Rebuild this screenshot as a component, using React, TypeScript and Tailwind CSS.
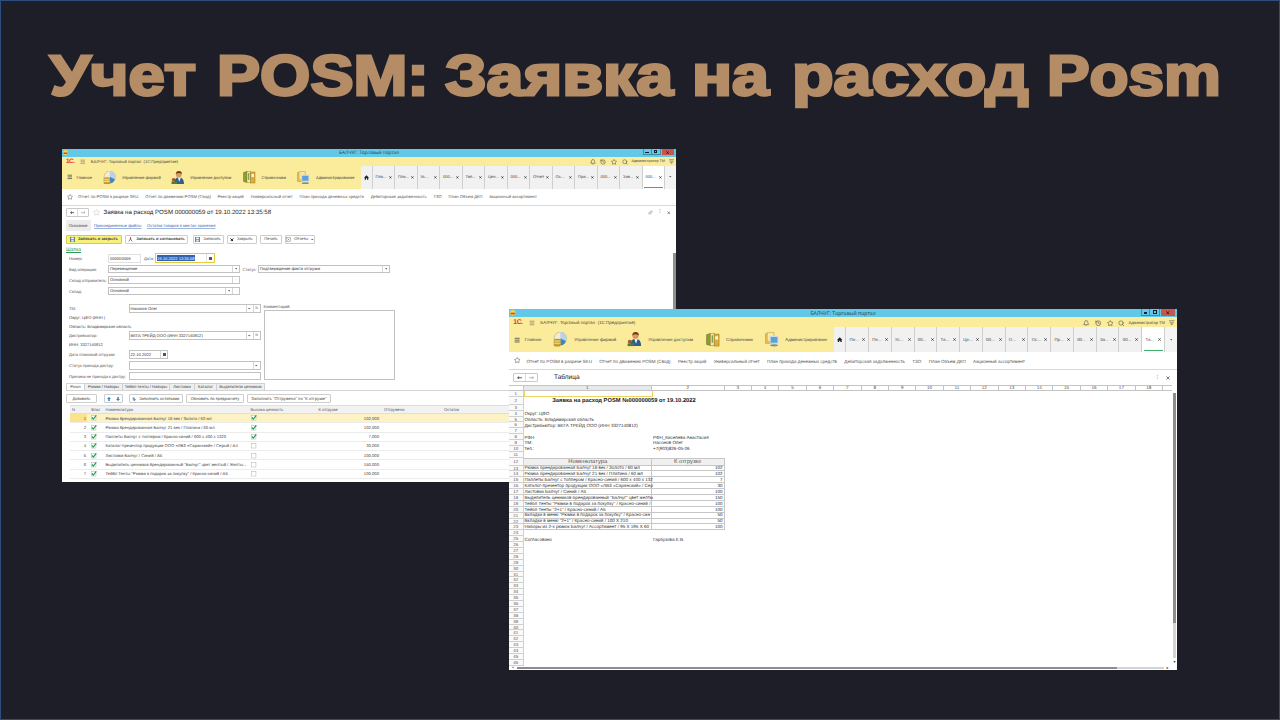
import React from "react";
import { Bell, History, Star, Search, Menu, Link2 } from "lucide-react";

type Kids = { children?: React.ReactNode; className?: string };

function BallIcon() {
  return (
    <svg viewBox="0 0 26 26" className="size-[1.35em]">
      <circle cx="13" cy="11" r="11" fill="#f3ead2" stroke="#b9a468" />
      <path d="M13 11 V0 A11 11 0 0 1 23 16 Z" fill="#b9d2e6" />
      <path d="M13 11 L23 16 A11 11 0 0 1 14 24 Z" fill="#3f86c4" />
      <rect x="2" y="13" width="11" height="12" rx="2" fill="#cda434" stroke="#957322" />
      <path d="M2 16 h11 M2 20 h11" stroke="#f4dd8b" strokeWidth="2" />
    </svg>
  );
}
function PersonIcon() {
  return (
    <svg viewBox="0 0 26 26" className="size-[1.35em]">
      <path d="M6 25 Q6 12 15 12 Q25 12 25 25 Z" fill="#2f5f86" />
      <path d="M13 12 l3 9 l3 -9 Z" fill="#f1f5f8" />
      <circle cx="15" cy="6.5" r="5.5" fill="#d8985a" />
      <path d="M9 6 Q10 0 15 0 Q21 0 21 6 Q15 2 9 6" fill="#6b3d16" />
      <path d="M1 20 h11 v5 h-11 Z" fill="#4c7f3f" />
      <circle cx="5" cy="17" r="3.5" fill="#9c5a35" />
    </svg>
  );
}
function BookIcon() {
  return (
    <svg viewBox="0 0 26 26" className="size-[1.3em]">
      <path d="M1 3 l7 -2 v22 l-7 -2 Z" fill="#8c9c31" stroke="#66741c" />
      <rect x="8" y="1" width="7" height="22" fill="#f6eab5" stroke="#9a8736" />
      <rect x="15" y="2" width="9" height="22" fill="#dcae3c" stroke="#9a7722" />
      <rect x="17" y="6" width="5" height="6" fill="#fff6d6" />
      <path d="M11.500 4 v14" stroke="#5e8a3a" strokeWidth="2" />
    </svg>
  );
}
function AdminIcon() {
  return (
    <svg viewBox="0 0 26 26" className="size-[1.35em]">
      <path d="M1 3 h14 v17 h-14 Z" fill="#efc65a" stroke="#b98b28" />
      <path d="M4 1 h12 v16 h-12 Z" fill="#fbe7a6" stroke="#c19a3d" />
      <rect x="9" y="8" width="14" height="12" rx="1.500" fill="#5aa2d8" stroke="#cfdbe4" strokeWidth="2" />
      <ellipse cx="16" cy="23.500" rx="7" ry="2" fill="#7f8c95" />
    </svg>
  );
}
function HomeIcon() {
  return (
    <svg viewBox="0 0 12 12" className="size-[.5em]">
      <path d="M6 0.500 L12 6.500 H10.300 V11.500 H7.300 V8 H4.700 V11.500 H1.700 V6.500 H0 Z" fill="#222" />
    </svg>
  );
}
function Caret() {
  return (
    <svg viewBox="0 0 8 5" className="h-[1.6px] w-[2.6px] shrink-0">
      <path d="M0 0 h8 l-4 5 Z" fill="#666" />
    </svg>
  );
}
function FilterIcon() {
  return (
    <svg viewBox="0 0 12 12" className="size-[.5em]" stroke="#555" strokeWidth="1.200" fill="none">
      <path d="M0 1.500 h12 M1 5 h10 M3.500 8 h5 l-2.500 3 Z" />
    </svg>
  );
}
function Arrow({ left, color = "#333" }: { left?: boolean; color?: string }) {
  return (
    <svg viewBox="0 0 12 8" className="h-[.32em] w-[.48em]">
      <path d={left ? "M12 4 H1.500 M5 1 L1.500 4 L5 7" : "M0 4 H10.500 M7 1 L10.500 4 L7 7"} stroke={color} strokeWidth="1.800" fill="none" />
    </svg>
  );
}

function Chrome({ tabs, narrow }: { tabs: string[]; narrow?: boolean }) {
  const t = "text-[.405em]";
  const links = [
    "Отчет по POSM в разрезе SKU",
    "Отчет по движению POSM (Свод)",
    "Реестр акций",
    "Универсальный отчет",
    "План прихода денежных средств",
    "Дебиторская задолженность",
    "ТЗО",
    "План Объем ДКП",
    "Акционный ассортимент",
  ];
  return (
    <header className="flex shrink-0 flex-col">
      <div className="flex h-[.75em] items-center bg-[#62c8e7]">
        <div className="flex w-[7em] pl-[.1em]">
          <svg viewBox="0 0 10 10" className="size-[.5em]">
            <circle cx="5" cy="5" r="5" fill="#f5d64b" />
            <path d="M1 5 h8 v3 h-8 Z" fill="#d8472d" />
          </svg>
        </div>
        <div className="flex flex-1 justify-center pt-[.2em]">
          <span className="font-['Open_Sans',sans-serif] text-[.47em] text-[#1d3a48]">БАЛЧУГ: Торговый портал</span>
        </div>
        <div className="flex h-full w-[7em] items-start justify-end pr-[.2em] text-[#10232c]">
          <div className="flex h-[.62em] w-[.9em] items-end justify-center border border-t-0 border-[#3f8ea8] pb-[.1em]">
            <i className="h-[.12em] w-[.34em] bg-[#10232c]" />
          </div>
          <div className="flex h-[.62em] w-[.9em] items-center justify-center border border-t-0 border-l-0 border-[#3f8ea8]">
            <i className="h-[.32em] w-[.34em] border border-[#10232c]" />
          </div>
          <div className="ml-[.1em] flex h-[.62em] w-[1.25em] items-center justify-center bg-[#c4574f]">
            <svg viewBox="0 0 8 8" className="size-[.32em]"><path d="M1 1 l6 6 M7 1 l-6 6" stroke="#2a0d0b" strokeWidth="2" /></svg>
          </div>
        </div>
      </div>
      <div className="flex h-[.95em] items-center bg-[#fbec9c] pt-[.1em] pl-[.4em] text-[#444]">
        <div className="flex w-[1.4em] pt-[.15em]">
          <span className="text-[.64em] font-bold tracking-[-.08em] text-[#d9402a]">1С.</span>
        </div>
        <div className="flex w-[1.080em]"><Menu className="size-[.55em]" strokeWidth={1.8} /></div>
        <div className="flex pt-[.08em]"><span className="text-[.413em]">БАЛЧУГ: Торговый портал&nbsp; (1С:Предприятие)</span></div>
        <div className="ml-auto flex items-center gap-[.48em] pr-[.2em]">
          <Bell className="size-[.6em]" />
          <History className="size-[.6em]" />
          <Star className="size-[.6em]" />
          <Search className="size-[.6em]" />
          <div className="-ml-[.14em] flex w-[3.280em] pt-[.1em]"><span className="text-[.375em]">Администратор ТМ</span></div>
          <FilterIcon />
        </div>
      </div>
      <div className="flex h-[2.25em] bg-[#fbec9c] text-[#444]">
        <div className="flex w-[29.900em] items-center">
          <div className="flex w-[1.450em] pl-[.45em]"><Menu className="size-[.58em]" strokeWidth={3} /></div>
          <div className="flex w-[2.600em] pt-[.06em]"><span className={t}>Главное</span></div>
          <div className="flex w-[1.950em]"><BallIcon /></div>
          <div className="flex w-[4.850em] pt-[.06em]"><span className={t}>Управление фирмой</span></div>
          <div className="flex w-[1.950em]"><PersonIcon /></div>
          <div className="flex w-[5.300em] pt-[.06em]"><span className={t}>Управление доступом</span></div>
          <div className="flex w-[1.850em]"><BookIcon /></div>
          <div className="flex w-[3.550em] pt-[.06em]"><span className={t}>Справочники</span></div>
          <div className="flex w-[1.900em]"><AdminIcon /></div>
          <div className="flex pt-[.06em]"><span className={t}>Администрирование</span></div>
        </div>
        <div className={"flex items-center justify-center border-r border-[#cfcfcf] bg-[#f1f1f1] " + (narrow ? "w-[1.100em]" : "w-[1.150em]")}><HomeIcon /></div>
        {tabs.map((s, i) => {
          const on = i === tabs.length - 1;
          return (
            <div key={i} className={"relative flex min-w-0 flex-1 items-center justify-between border-r border-[#cfcfcf] pr-[.25em] pl-[.3em] " + (on ? "bg-white" : "bg-[#f1f1f1]")}>
              <span className={t}>{s}</span>
              <svg viewBox="0 0 8 8" className="size-[.28em]"><path d="M1 1 l6 6 M7 1 l-6 6" stroke="#333" strokeWidth="2.200" /></svg>
              {on && <i className="absolute right-[.1em] bottom-[.08em] left-[.15em] h-[1px] bg-[#3fae6a]" />}
            </div>
          );
        })}
        <div className="flex w-[1.100em] items-center justify-center bg-[#f4f4f4]"><Caret /></div>
      </div>
      <div className="flex h-[1.700em] items-center border-b border-[#d9d9d9] pl-[.5em] text-[#555]">
        <div className="flex w-[1.100em]"><Star className="size-[.6em]" /></div>
        <div className="flex gap-[.68em] pt-[.22em]">
          {links.map((l) => (
            <div key={l} className="flex"><span className="text-[.420em]">{l}</span></div>
          ))}
        </div>
      </div>
    </header>
  );
}

function Btn({ children, className = "", tone = "border-[#cdcdcd] bg-white" }: Kids & { tone?: string }) {
  return (
    <div className={"flex h-[9px] shrink-0 items-center justify-center gap-[3px] rounded-[1px] border pt-[.6px] text-[4.05px] text-[#444] " + tone + " " + className}>
      {children}
    </div>
  );
}
function Field({ children, className = "", parts = [] }: Kids & { parts?: string[] }) {
  return (
    <div className={"flex h-[8.500px] shrink-0 items-stretch border border-[#c2c2c2] bg-white " + className}>
      <span className="flex flex-1 items-center pt-[.4px] pl-[1px] text-[#333]">{children}</span>
      {parts.map((p, i) => (
        <span key={i} className="flex w-[7px] items-center justify-center border-l border-[#d5d5d5] text-[3.500px] text-[#666]">
          {p === "v" ? <Caret /> : p === "cal" ? <i className="h-[3.500px] w-[3px] border border-t-2 border-[#555]" /> : p}
        </span>
      ))}
    </div>
  );
}
function Check({ on }: { on?: boolean }) {
  return (
    <svg viewBox="0 0 12 12" className="size-[5.500px] overflow-visible">
      <rect x="0.800" y="1" width="10" height="10" fill="#fff" stroke="#a9a9a9" />
      {on && <path d="M2 5 L5 9 L11.500 1" stroke="#1f9d50" strokeWidth="2.600" fill="none" />}
    </svg>
  );
}
function Disk() {
  return (
    <svg viewBox="0 0 10 10" className="size-[5px]">
      <rect x="0.500" y="0.500" width="9" height="9" fill="#5d8fb5" stroke="#3f6b8c" />
      <rect x="2.500" y="1" width="5" height="3.500" fill="#fff" />
      <rect x="2.500" y="6" width="5" height="3.500" fill="#dbe7ef" />
    </svg>
  );
}
function NavButtons({ className = "" }: Kids) {
  return (
    <div className={"flex h-[.850em] w-[2.300em] rounded-[1px] border border-[#c9c9c9] bg-white " + className}>
      <span className="flex flex-1 items-center justify-center border-r border-[#dddddd]"><Arrow left /></span>
      <span className="flex flex-1 items-center justify-center"><Arrow color="#aaa" /></span>
    </div>
  );
}

const items: [string, boolean, string][] = [
  ["Рюмка брендированная Балчуг 16 век / Золото / 60 мл", true, "102,000"],
  ["Рюмка брендированная Балчуг 21 век / Платина / 60 мл", true, "102,000"],
  ["Паллеты Балчуг с топпером / Красно-синий / 600 х 400 х 1320", true, "7,000"],
  ["Каталог-презентор продукции ООО «ЛВЗ «Саранский» / Серый / А4", false, "30,000"],
  ["Листовки Балчуг / Синий / А5", false, "100,000"],
  ["Выделитель ценников брендированный \"Балчуг\" цвет желтый / Желты...", false, "150,000"],
  ["Тейбл Тенты \"Рюмки в подарок за покупку\" / Красно-синий / А5", false, "100,000"],
];

function RequestWindow() {
  const label = "flex shrink-0 pt-[1px] text-[#555]";
  return (
    <section className="absolute top-[149px] left-[62px] flex h-[333px] w-[614px] flex-col overflow-hidden bg-white text-[10px]">
      <Chrome tabs={["Пла...", "Пла...", "Ус...", "000...", "Тип...", "Цен...", "000...", "Отчет", "Ос...", "При...", "000...", "Зав...", "000..."]} />
      <div className="flex h-[13.200px] shrink-0 items-center pt-[.5px] pr-[6px] pl-[4px]">
        <NavButtons />
        <div className="ml-[4px] flex w-[10.500px]"><Star className="size-[7px] text-[#bbb]" strokeWidth={1.5} /></div>
        <span className="pt-[1.600px] text-[6.130px] text-[#222]">Заявка на расход POSM 000000059 от 19.10.2022 13:35:58</span>
        <div className="ml-auto flex items-center gap-[6px] text-[6px] text-[#666]">
          <Link2 className="size-[5px] -rotate-45" />
          <span>⁝</span>
          <svg viewBox="0 0 8 8" className="size-[3.500px]"><path d="M1 1 l6 6 M7 1 l-6 6" stroke="#555" strokeWidth="1.500" /></svg>
        </div>
      </div>
      <div className="flex min-h-0 flex-1">
        <div className="flex w-[611px] flex-col pl-[4px] text-[4.100px] text-[#444]">
          <nav className="flex h-[13.500px] shrink-0 items-center">
            <span className="flex h-[11px] w-[24.500px] items-center justify-center bg-[#ededed] pt-[.6px]">Основное</span>
            <span className="ml-[3.500px] w-[53px] pt-[.6px] text-[#3a66b0] underline decoration-[#9db4dc] decoration-[.5px]">Присоединенные файлы</span>
            <span className="pt-[.6px] text-[#3a66b0] underline decoration-[#9db4dc] decoration-[.5px]">Остатки товаров в местах хранения</span>
          </nav>
          <div className="flex h-[14px] shrink-0 items-center">
            <Btn className="w-[56px] font-bold" tone="border-[#d8c94a] bg-[#f7f07a]"><Disk />Записать и закрыть</Btn>
            <Btn className="ml-[3px] w-[63px] font-bold">
              <svg viewBox="0 0 10 10" className="size-[5px]"><path d="M5 1 V4 L1.500 9 M5 4 L8.500 9" stroke="#555" strokeWidth="1.500" fill="none" /><circle cx="5" cy="1.800" r="1.500" fill="#c33" /></svg>
              Записать и согласовать
            </Btn>
            <Btn className="ml-[4.500px] w-[31px]"><Disk />Записать</Btn>
            <Btn className="ml-[3px] w-[30px]">
              <svg viewBox="0 0 8 8" className="size-[3.800px]"><path d="M1 1 l6 6 M7 1 l-6 6" stroke="#111" strokeWidth="2" /></svg>
              Закрыть
            </Btn>
            <Btn className="ml-[3.500px] w-[22px]">Печать</Btn>
            <Btn className="ml-[3px] w-[30px] gap-[2px]">
              <svg viewBox="0 0 10 10" className="size-[5px]"><rect x="1" y="1" width="8" height="8" fill="#fff" stroke="#888" /><path d="M3 3 l4 4 M7 3 l-4 4" stroke="#b36" /></svg>
              Отчеты<Caret />
            </Btn>
          </div>
          <div className="flex h-[7px] shrink-0 items-center pt-[.8px]"><span className="text-[5px] text-[#2d9a57] underline decoration-[.5px]">Шапка</span></div>
          <div className="flex h-[10.500px] shrink-0 items-center pl-[3px]">
            <div className={label + " w-[39px]"}>Номер:</div>
            <Field className="w-[33px] border-[#e0e0e0]">000000059</Field>
            <div className={label + " ml-[3px] w-[11px]"}>Дата:</div>
            <div className="flex h-[10px] w-[60px] items-center border border-[#e9c93c] bg-white pl-[1px]">
              <span className="flex h-[6px] w-[38px] items-center bg-[#3163b5] pt-[.6px] text-white">19.10.2022 13:35:58</span>
              <span className="ml-auto flex h-full w-[8px] items-center justify-center border-l border-[#e0e0e0]"><i className="h-[3.500px] w-[3px] border border-t-2 border-[#555]" /></span>
            </div>
          </div>
          <div className="flex h-[11px] shrink-0 items-center pl-[3px]">
            <div className={label + " w-[39px]"}>Вид операции:</div>
            <Field className="w-[132px]" parts={["v"]}>Перемещение</Field>
            <div className={label + " ml-[2.500px] w-[15.500px]"}>Статус:</div>
            <Field className="w-[132px]" parts={["v"]}>Подтверждение факта отгрузки</Field>
          </div>
          <div className="flex h-[11px] shrink-0 items-center pl-[3px]">
            <div className={label + " w-[39px]"}>Склад отправитель:</div>
            <Field className="w-[132px]" parts={["..."]}>Основной</Field>
          </div>
          <div className="flex h-[11px] shrink-0 items-center pl-[3px]">
            <div className={label + " w-[39px]"}>Склад:</div>
            <Field className="w-[132px]" parts={["v", "..."]}>Основной</Field>
          </div>
          <div className="mt-[6.800px] flex h-[77.500px] shrink-0 pl-[3px]">
            <div className="flex w-[194.500px] flex-col">
              <div className="flex h-[10px] items-center"><div className={label + " w-[59.500px]"}>ТМ:</div><Field className="w-[132px]" parts={["v", "⧉"]}>Насонов Олег</Field></div>
              <div className="flex h-[9px] items-center pt-[1px]">Округ: ЦФО (ИНН )</div>
              <div className="flex h-[8.500px] items-center pt-[1px]">Область: Владимирская область</div>
              <div className="flex h-[9.500px] items-center"><div className={label + " w-[59.500px]"}>Дистрибьютор:</div><Field className="w-[132px]" parts={["v", "⧉"]}>ВЕГА ТРЕЙД ООО (ИНН 3327140812)</Field></div>
              <div className="flex h-[9px] items-center pt-[1px]">ИНН: 3327140812</div>
              <div className="flex h-[10px] items-center"><div className={label + " w-[59.500px]"}>Дата плановой отгрузки:</div><Field className="w-[39.500px]" parts={["cal"]}>22.10.2022</Field></div>
              <div className="flex h-[12px] items-center"><div className={label + " w-[59.500px]"}>Статус прихода дистру:</div><Field className="w-[132px]" parts={["v"]} /></div>
              <div className="flex h-[9.500px] items-center"><div className={label + " w-[59.500px]"}>Причина не прихода к дистру:</div><Field className="w-[132px]" /></div>
            </div>
            <div className="flex w-[132px] flex-col">
              <div className="flex h-[7px] items-center pt-[.8px] text-[#555]">Комментарий:</div>
              <div className="h-[69.500px] w-[131px] border border-[#c2c2c2]" />
            </div>
          </div>
          <div className="mt-[2px] flex h-[8.500px] shrink-0 items-stretch border-b border-[#d4d4d4]">
            <span className="flex w-[18px] items-center justify-center border-t border-l border-[#d4d4d4] bg-white pt-[.5px]">Posm</span>
            {[["Рюмки / Наборы", "w-[38px]"], ["Тейбл-тенты / Наборы", "w-[47px]"], ["Листовки", "w-[25px]"], ["Каталог", "w-[22px]"], ["Выделители ценников", "w-[49px]"]].map(([s, w]) => (
              <span key={s} className={"flex items-center justify-center border-t border-l border-[#d0d0d0] bg-[#efefef] pt-[.5px] last:border-r " + w}>{s}</span>
            ))}
          </div>
          <div className="flex h-[13.500px] shrink-0 items-center pt-[.6px]">
            <Btn className="w-[31px]">Добавить</Btn>
            <Btn className="ml-[6.500px] w-[19px] gap-[5px]">
              <svg viewBox="0 0 8 8" className="size-[4px]"><path d="M4 0 l4 4 h-2.500 v4 h-3 v-4 h-2.500 Z" fill="#2c82c0" /></svg>
              <svg viewBox="0 0 8 8" className="size-[4px] rotate-180"><path d="M4 0 l4 4 h-2.500 v4 h-3 v-4 h-2.500 Z" fill="#2c82c0" /></svg>
            </Btn>
            <Btn className="ml-[6px] w-[54.500px]">
              <svg viewBox="0 0 8 8" className="size-[4px]"><path d="M1 2 h3.500 v4 M2 4.500 l2.500 3 l2.500 -3" stroke="#1f5c94" strokeWidth="1.600" fill="none" /></svg>
              Заполнить остатками
            </Btn>
            <Btn className="ml-[3px] w-[58px]">Обновить по предрасчету</Btn>
            <Btn className="ml-[3px] w-[84px] text-[4.200px]">Заполнить "Отгружено" по "К отгрузке"</Btn>
          </div>
          <div className="ml-[4px] flex h-[9px] shrink-0 items-center border-y border-[#dedede] bg-[#f2f2f2] pt-[.5px] text-[#555]">
            <span className="w-[21px] pl-[2px]">N</span>
            <span className="w-[14.500px]">Флаг</span>
            <span className="w-[145px]">Номенклатура</span>
            <span className="w-[68px]">Высока ценность</span>
            <span className="w-[65.500px]">К отгрузке</span>
            <span className="w-[60px]">Отгружено</span>
            <span>Остаток</span>
          </div>
          {items.map(([n, c, q], i) => (
            <div key={n} className={"ml-[4px] flex h-[9.300px] shrink-0 items-center border-b border-[#ececec] text-[4.200px] " + (i === 0 ? "bg-[#fdf2c4]" : "")}>
              <span className={"flex h-full w-[17px] items-center justify-end pt-[1px] pr-[1px] " + (i === 0 ? "bg-[#fbe38c]" : "")}>{i + 1}</span>
              <span className="flex w-[18.500px] pl-[4px]"><Check on /></span>
              <span className="w-[145px] pt-[1px] whitespace-nowrap">{n}</span>
              <span className="flex w-[68px]"><Check on={c} /></span>
              <span className="flex w-[60.500px] justify-end pt-[1px]">{q}</span>
            </div>
          ))}
        </div>
        <div className="mt-[34px] w-[3px] bg-[#8f8f8f]" />
      </div>
    </section>
  );
}

type Row = { a?: string; b?: string; table?: boolean };
const sheet: Record<number, Row> = {
  4: { a: "Округ: ЦФО" },
  5: { a: "Область: Владимирская область" },
  6: { a: "Дистрибьютор: ВЕГА ТРЕЙД ООО (ИНН 3327140812)" },
  8: { a: "РФН", b: "РФН_Киселева Анастасия" },
  9: { a: "ТМ:", b: "Насонов Олег" },
  10: { a: "тел.:", b: "+7(903)826-05-26" },
  12: { a: "Номенклатура", b: "К отгрузке", table: true },
  13: { a: "Рюмка брендированная Балчуг 16 век / Золото / 60 мл", b: "102", table: true },
  14: { a: "Рюмка брендированная Балчуг 21 век / Платина / 60 мл", b: "102", table: true },
  15: { a: "Паллеты Балчуг с топпером / Красно-синий / 600 х 400 х 132", b: "7", table: true },
  16: { a: "Каталог-презентор продукции ООО «ЛВЗ «Саранский» / Сер", b: "30", table: true },
  17: { a: "Листовки Балчуг / Синий / А5", b: "100", table: true },
  18: { a: "Выделитель ценников брендированный \"Балчуг\" цвет желты", b: "150", table: true },
  19: { a: "Тейбл Тенты \"Рюмки в подарок за покупку\" / Красно-синий /", b: "100", table: true },
  20: { a: "Тейбл Тенты \"2+1\" / Красно-синий / А5", b: "100", table: true },
  21: { a: "Вкладки в меню \"Рюмки в подарок за покупку\" / Красно-син", b: "50", table: true },
  22: { a: "Вкладки в меню \"2+1\" / Красно-синий / 100 Х 210", b: "50", table: true },
  23: { a: "Наборы из 2-х рюмок Балчуг / Ассортимент / 95 Х 195 Х 60", b: "100", table: true },
  25: { a: "Согласовано", b: "Гарбузова Е.В." },
};

function SheetRow({ n }: { n: number }) {
  const r = sheet[n] ?? {};
  const head = n === 12;
  const h = n === 2 ? "h-[8px]" : head ? "h-[7.800px]" : n === 1 ? "h-[6px]" : "h-[5.900px]";
  const line = r.table ? "border-r border-b border-[#c6c6c6] " : "";
  const headStyle = "justify-center border-t bg-[#f0f0f0] pt-[1.500px] text-[5.800px] text-[#555]";
  return (
    <div className={"flex shrink-0 " + h}>
      <span className="flex w-[14.500px] items-center justify-center border-r border-b border-[#d0d0d0] bg-[#fafafa] pt-[1.500px] text-[4.400px] text-[#555]">{n}</span>
      {n === 1 && <span className="w-[129px] border border-t-0 border-[#ecd461]" />}
      {n === 2 && <span className="flex w-[201px] items-center justify-center pt-[1.500px] text-[5.780px] font-bold text-[#222]">Заявка на расход POSM №000000059 от 19.10.2022</span>}
      {n > 2 && (
        <>
          <span className={"flex w-[128.500px] items-center pl-[1px] whitespace-nowrap " + line + (head ? headStyle : "pt-[1.300px]")}>{r.a}</span>
          <span className={"flex w-[72.500px] items-center whitespace-nowrap " + line + (head ? headStyle : r.table ? "justify-end pt-[1.300px] pr-[1px]" : "pt-[1.300px] pl-[1px]")}>{r.b}</span>
        </>
      )}
    </div>
  );
}

function SheetWindow() {
  return (
    <section className="absolute top-[309px] left-[509px] flex h-[361px] w-[668px] flex-col overflow-hidden bg-white text-[10.880px]">
      <Chrome narrow tabs={["Пе...", "Пе...", "Ус...", "00...", "Та...", "Це...", "00...", "О...", "Ос...", "Пр...", "00...", "За...", "00...", "Та..."]} />
      <div className="flex h-[14.300px] shrink-0 items-center pr-[7px] pl-[4px]">
        <NavButtons />
        <span className="ml-[16px] pt-[2.200px] text-[6.500px] text-[#222]">Таблица</span>
        <div className="ml-auto flex items-center gap-[8px] text-[6px] text-[#666]">
          <span>⁝</span>
          <svg viewBox="0 0 8 8" className="size-[4px]"><path d="M1 1 l6 6 M7 1 l-6 6" stroke="#555" strokeWidth="1.500" /></svg>
        </div>
      </div>
      <div className="flex min-h-0 flex-1 text-[4.560px] text-[#333]">
        <div className="flex w-[663px] flex-col overflow-hidden">
          <div className="flex h-[6px] shrink-0 border-y border-[#c4c4c4] text-[#555]">
            <span className="w-[14.500px] shrink-0 border-r border-[#c4c4c4]" />
            <span className="flex w-[128.500px] shrink-0 items-center justify-center border-r border-[#c4c4c4] bg-[#e9e9e9] pt-[1px]">1</span>
            <span className="flex w-[72.500px] shrink-0 items-center justify-center border-r border-[#c4c4c4] pt-[1px]">2</span>
            {Array.from({ length: 16 }, (_, i) => (
              <span key={i} className="flex w-[27.420px] shrink-0 items-center justify-center border-r border-[#c4c4c4] pt-[1px]">{i + 3}</span>
            ))}
          </div>
          <div className="flex min-h-0 flex-1 flex-col overflow-hidden">
            {Array.from({ length: 46 }, (_, i) => <SheetRow key={i} n={i + 1} />)}
          </div>
          <div className="flex h-[4.500px] shrink-0 items-center pl-[3px]">
            <span className="text-[3px]">◂</span>
            <i className="ml-[3px] h-[2.500px] w-[600px] bg-[#8d8d8d]" />
            <i className="h-[2.500px] w-[47px] bg-[#d4d4d4]" />
            <span className="ml-[3px] text-[4px]">▸</span>
          </div>
        </div>
        <div className="flex flex-1 flex-col items-center pt-[8px]">
          <i className="h-[230px] w-[3px] bg-[#8d8d8d]" />
          <i className="h-[35px] w-[3px] bg-[#d4d4d4]" />
          <span className="mt-[2px] text-[4px]">▾</span>
        </div>
      </div>
    </section>
  );
}

const words = [
  ["Учет ", "w-[167px]", "scale-x-[1.145]"],
  ["POSM: ", "w-[228px]", "scale-x-[1.134]"],
  ["Заявка ", "w-[247px]", "scale-x-[1.165]"],
  ["на ", "w-[100px]", "scale-x-[1.165]"],
  ["расход ", "w-[255px]", "scale-x-[1.195]"],
  ["Posm", "w-[180px]", "scale-x-[1.120]"],
];

export default function App() {
  return (
    <main className="relative flex h-[720px] w-[1280px] flex-col overflow-hidden border border-[#2c4f80] bg-[#1d1e28] font-['Liberation_Sans',Arial,sans-serif] leading-none whitespace-nowrap [text-rendering:geometricPrecision]">
      <h1 className="flex h-[150px] shrink-0 items-center pl-[49px] text-[57px] font-bold text-[#b48c66] [-webkit-text-stroke:2.800px_#b48c66]">
        {words.map(([s, w, x]) => (
          <span key={s} className={"flex shrink-0 " + w}>
            <span className={"origin-left " + x}>{s}</span>
          </span>
        ))}
      </h1>
      <div className="absolute -top-px -left-px">
        <RequestWindow />
        <SheetWindow />
      </div>
    </main>
  );
}
